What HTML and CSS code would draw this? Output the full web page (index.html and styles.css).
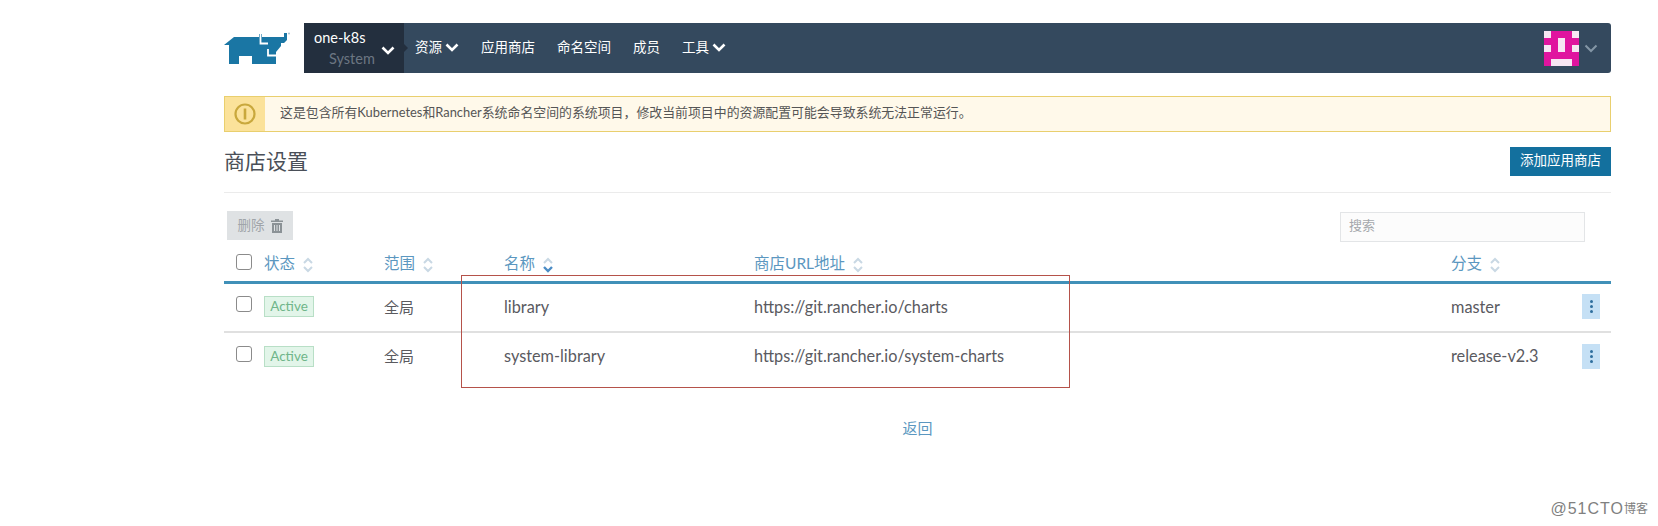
FILE: index.html
```html
<!DOCTYPE html>
<html lang="zh">
<head>
<meta charset="utf-8">
<title>商店设置</title>
<link rel="stylesheet" href="styles.css">
</head>
<body>
<div class="page">
  <header class="top">
    <svg class="logo" viewBox="0 0 66 32" width="66" height="32">
      <path fill="#1a76a4" d="M10 5H35V2H38V5H57L60 5V1H63V8L60 11H57V14L52 20V32H28V24H15V32H5V13H0Z"/>
      <path d="M36.500 2V11.500H44M44 17V23.500H52" fill="none" stroke="#fff" stroke-width="1.800"/>
      <circle cx="65" cy="1.500" r="1" fill="#a9c2d1"/>
    </svg>
    <nav class="bar">
      <div class="cluster">
        <div class="cluster-names"><span class="c1">one-k8s</span><span class="c2">System</span></div>
        <svg class="chev" width="14" height="9" viewBox="0 0 14 9"><path d="M1.500 1.500 7 7l5.500-5.500" fill="none" stroke="#fff" stroke-width="2.600"/></svg>
      </div>
      <a class="item">资源<svg class="chev" width="14" height="9" viewBox="0 0 14 9"><path d="M1.500 1.500 7 7l5.500-5.500" fill="none" stroke="#fff" stroke-width="2.600"/></svg></a>
      <a class="item">应用商店</a>
      <a class="item">命名空间</a>
      <a class="item">成员</a>
      <a class="item">工具<svg class="chev" width="14" height="9" viewBox="0 0 14 9"><path d="M1.500 1.500 7 7l5.500-5.500" fill="none" stroke="#fff" stroke-width="2.600"/></svg></a>
      <div class="user">
        <svg width="35" height="35" viewBox="0 0 35 35" shape-rendering="crispEdges">
          <rect width="35" height="35" fill="#e0149f"/>
          <path fill="#f7e6f3" d="M0 0H7V7H0ZM28 0H35V7H28ZM14 7H21V21H14ZM0 14H7V21H0ZM28 14H35V21H28ZM7 28H28V35H7Z"/>
        </svg>
        <svg width="14" height="9" viewBox="0 0 14 9"><path d="M1.500 1.500 7 7l5.500-5.500" fill="none" stroke="#8496a6" stroke-width="2"/></svg>
      </div>
    </nav>
  </header>

  <div class="alert">
    <div class="alert-icon">
      <svg width="22" height="22" viewBox="0 0 22 22"><circle cx="11" cy="11" r="9.500" fill="none" stroke="#c9a83c" stroke-width="2.200"/><path d="M11 5.500v11" stroke="#c9a83c" stroke-width="2.600"/></svg>
    </div>
    <p class="alert-text">这是包含所有Kubernetes和Rancher系统命名空间的系统项目，修改当前项目中的资源配置可能会导致系统无法正常运行。</p>
  </div>

  <div class="title-row">
    <h1>商店设置</h1>
    <button class="add">添加应用商店</button>
  </div>

  <div class="tools">
    <button class="del">删除
      <svg width="12" height="14" viewBox="0 0 12 14"><path fill="#8b9296" d="M4 0h4v1.500h4V3H0V1.500h4ZM1 4h10v10H1Zm2 2v6h1V6Zm2.500 0v6h1V6ZM8 6v6h1V6Z"/></svg>
    </button>
    <input class="search" placeholder="搜索">
  </div>

  <div class="table">
    <div class="row head">
      <span class="cell"><i class="box"></i></span>
      <span class="cell">状态<svg class="sort" viewBox="0 0 10 16" width="10" height="16"><path d="M1 6l4-4 4 4M1 10l4 4 4-4" fill="none" stroke="#c9d8e4" stroke-width="2"/></svg></span>
      <span class="cell">范围<svg class="sort" viewBox="0 0 10 16" width="10" height="16"><path d="M1 6l4-4 4 4M1 10l4 4 4-4" fill="none" stroke="#c9d8e4" stroke-width="2"/></svg></span>
      <span class="cell">名称<svg class="sort" viewBox="0 0 10 16" width="10" height="16"><path d="M1 6l4-4 4 4" fill="none" stroke="#c9d8e4" stroke-width="2"/><path d="M1 10l4 4 4-4" fill="none" stroke="#4b8cc5" stroke-width="2.400"/></svg></span>
      <span class="cell">商店URL地址<svg class="sort" viewBox="0 0 10 16" width="10" height="16"><path d="M1 6l4-4 4 4M1 10l4 4 4-4" fill="none" stroke="#c9d8e4" stroke-width="2"/></svg></span>
      <span class="cell">分支<svg class="sort" viewBox="0 0 10 16" width="10" height="16"><path d="M1 6l4-4 4 4M1 10l4 4 4-4" fill="none" stroke="#c9d8e4" stroke-width="2"/></svg></span>
      <span class="cell"></span>
    </div>
    <div class="row body">
      <span class="cell"><i class="box"></i></span>
      <span class="cell"><b class="badge">Active</b></span>
      <span class="cell cjk">全局</span>
      <span class="cell">library</span>
      <span class="cell">https://git.rancher.io/charts</span>
      <span class="cell">master</span>
      <span class="cell"><button class="more"><i></i><i></i><i></i></button></span>
    </div>
    <div class="row body">
      <span class="cell"><i class="box"></i></span>
      <span class="cell"><b class="badge">Active</b></span>
      <span class="cell cjk">全局</span>
      <span class="cell">system-library</span>
      <span class="cell">https://git.rancher.io/system-charts</span>
      <span class="cell">release-v2.3</span>
      <span class="cell"><button class="more"><i></i><i></i><i></i></button></span>
    </div>
  </div>

  <div class="back"><a>返回</a></div>
</div>
<div class="annotation"></div>
<div class="watermark"><span class="wm-latin">@51CTO</span><span class="wm-cjk">博客</span></div>
</body>
</html>
```
FILE: styles.css
```css
* { box-sizing: border-box; }
html, body { margin: 0; height: 100%; }
body {
  background: #fff;
  color: #4a4a4f;
  font: 14px/20px Lato, "Noto Sans CJK SC", sans-serif;
  overflow: hidden;
  position: relative;
}
.page { padding: 23px 47px 0 224px; }

.top { display: flex; align-items: center; }
.logo { width: 66px; height: 32px; margin: -1px 14px 0 0; flex: none; }
.bar {
  flex: 1;
  height: 50px;
  background: #34495e;
  border-radius: 0 3px 3px 0;
  display: flex;
  align-items: center;
  color: #fff;
}
.chev { flex: none; }
.cluster {
  position: relative;
  width: 100px;
  height: 50px;
  background: #232f3e;
  padding: 0 9px 0 10px;
  display: flex;
  align-items: center;
  justify-content: space-between;
  margin-right: 11px;
}
.cluster::after {
  content: "";
  position: absolute;
  left: 100%;
  top: 21px;
  border: 4px solid transparent;
  border-left-color: #232f3e;
}
.cluster-names { display: flex; flex-direction: column; line-height: 21px; font-size: 14.500px; margin-top: -1px; }
.c1 { color: #fff; }
.c2 { color: #6c7682; margin-left: 15px; }
.cluster .chev { margin-top: 4px; }
.item { display: flex; align-items: center; gap: 3px; margin: -2px 22px 0 0; font-size: 13.500px; }
.user { margin-left: auto; margin-right: 13px; display: flex; align-items: center; gap: 5px; }

.alert {
  margin-top: 23px;
  height: 36px;
  border: 1px solid #e9cf6e;
  background: #fff9ea;
  display: flex;
  align-items: center;
}
.alert-icon {
  width: 40px;
  height: 34px;
  background: #fbe29a;
  display: flex;
  align-items: center;
  justify-content: center;
  flex: none;
}
.alert-text { margin: 0 0 5px 15px; font-size: 12.900px; color: #555; }

.title-row {
  display: flex;
  justify-content: space-between;
  align-items: flex-start;
  height: 46px;
  margin-top: 15px;
  border-bottom: 1px solid #ebebeb;
}
h1 { margin: 0; font-size: 21px; line-height: 28px; font-weight: 400; color: #4a4f58; }
.add {
  width: 101px;
  height: 29px;
  border: 0;
  background: #13709e;
  color: #fff;
  padding: 0 0 2px;
  font: 13.500px/27px Lato, "Noto Sans CJK SC", sans-serif;
}

.tools {
  display: flex;
  justify-content: space-between;
  align-items: flex-start;
  padding: 18px 26px 0 3px;
  height: 59px;
}
.del {
  width: 66px;
  height: 29px;
  border: 0;
  background: #dfe2e4;
  color: #a0a5a9;
  padding: 0;
  display: flex;
  align-items: center;
  justify-content: center;
  gap: 6px;
  font: 13.500px/29px Lato, "Noto Sans CJK SC", sans-serif;
}
.search {
  width: 245px;
  height: 30px;
  margin-top: 1px;
  border: 1px solid #e3e5e7;
  background: #fcfcfc;
  padding: 0 8px 4px;
  font: 13px Lato, "Noto Sans CJK SC", sans-serif;
}
.search::placeholder { color: #a5a8ac; opacity: 1; }

.row {
  display: grid;
  grid-template-columns: 40px 120px 120px 250px 697px 1fr 29px;
  align-items: center;
}
.cell { display: flex; align-items: center; }
.head {
  height: 32px;
  padding-bottom: 7px;
  color: #5b97c0;
  font-size: 15.500px;
  border-bottom: 3px solid #4090b8;
}
.head .box { margin-top: -3px; }
.body {
  height: 49px;
  padding-bottom: 2px;
  font-size: 16.300px;
  color: #5a5a5f;
  border-bottom: 2px solid #e0e0e0;
}
.body:last-child { height: 46px; padding-bottom: 0; border-bottom: 0; }
.cjk { font-size: 15px; }
.sort { margin-left: 8px; margin-top: 3px; }
.box {
  display: block;
  width: 16px;
  height: 16px;
  margin: -5px 0 0 12px;
  border: 1.500px solid #8b8b8b;
  border-radius: 3px;
  background: #fff;
}
.badge {
  font-weight: 400;
  font-size: 13.500px;
  line-height: 19px;
  width: 50px;
  text-align: center;
  border: 1px solid #b8dfc6;
  background: #e2f5e9;
  color: #6fb58a;
}
.more {
  width: 18px;
  height: 25px;
  border: 0;
  padding: 0;
  background: #c5e0f5;
  display: flex;
  flex-direction: column;
  align-items: center;
  justify-content: center;
  gap: 2px;
}
.more i { display: block; width: 3px; height: 3px; border-radius: 50%; background: #2e6e9e; }
.back { text-align: center; margin-top: 39px; color: #5b97c0; font-size: 15px; }

.annotation {
  position: absolute;
  left: 461px;
  top: 275px;
  width: 609px;
  height: 113px;
  border: 1px solid #b5524a;
}
.watermark {
  position: absolute;
  right: 10px;
  top: 499px;
  color: #808080;
  display: flex;
  align-items: center;
}
.wm-latin { font: 16px/20px "Liberation Sans", sans-serif; letter-spacing: 1px; }
.wm-cjk { font-size: 12px; }
```
